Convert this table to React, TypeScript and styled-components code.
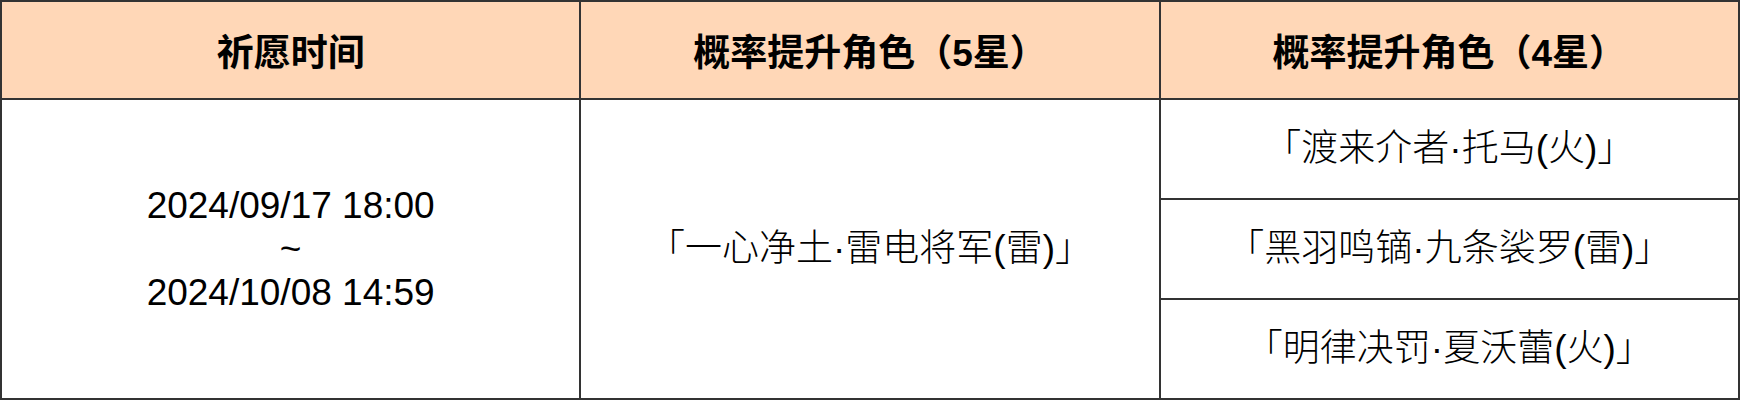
import React from "react"
import styled, { createGlobalStyle } from "styled-components"

const GlobalStyle = createGlobalStyle`
  html, body {
    margin: 0;
    padding: 0;
    background: #ffffff;
  }
`

const Table = styled.div`
  display: grid;
  grid-template-columns: repeat(3, 1fr);
  grid-template-rows: 96px repeat(3, 1fr);
  gap: 2px;
  width: 1740px;
  height: 400px;
  box-sizing: border-box;
  border: 2px solid #333333;
  background-color: #333333;
`

const HeadCell = styled.div`
  display: flex;
  align-items: center;
  justify-content: center;
  background-color: #ffd7b7;
  color: #000000;
  font-family: "Liberation Sans", "Noto Sans CJK SC", sans-serif;
  font-weight: 700;
  font-size: 37px;
`

const Cell = styled.div<{ $span?: boolean }>`
  display: flex;
  flex-direction: column;
  align-items: center;
  justify-content: center;
  background-color: #ffffff;
  color: #000000;
  font-family: "Liberation Sans", "Noto Sans CJK SC", sans-serif;
  font-weight: 300;
  font-size: 37px;
  line-height: 1.17;
  grid-row: ${(p) => (p.$span ? "2 / 5" : "auto")};
`

const fourStars = [
  "「渡来介者·托马(火)」",
  "「黑羽鸣镝·九条裟罗(雷)」",
  "「明律决罚·夏沃蕾(火)」",
]

export default function App() {
  return (
    <>
      <GlobalStyle />
      <Table>
        <HeadCell>祈愿时间</HeadCell>
        <HeadCell>概率提升角色（5星）</HeadCell>
        <HeadCell>概率提升角色（4星）</HeadCell>
        <Cell $span>
          <span>2024/09/17 18:00</span>
          <span>~</span>
          <span>2024/10/08 14:59</span>
        </Cell>
        <Cell $span>「一心净土·雷电将军(雷)」</Cell>
        {fourStars.map((name) => (
          <Cell key={name}>{name}</Cell>
        ))}
      </Table>
    </>
  )
}
